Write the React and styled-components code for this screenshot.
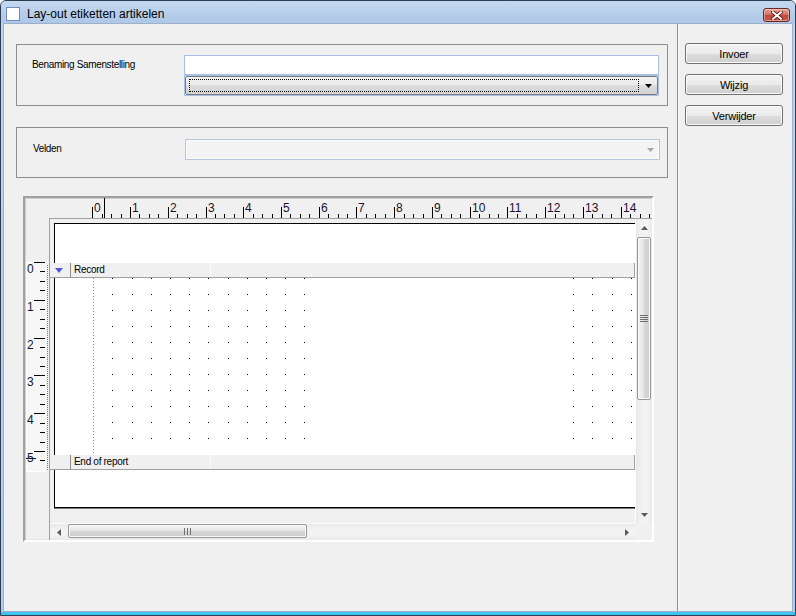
import React from "react";
import styled, { createGlobalStyle } from "styled-components";

const GlobalStyle = createGlobalStyle`
  html, body { margin: 0; padding: 0; background: #fff; }
  body { font-family: "Liberation Sans", Arial, sans-serif; }
  * { box-sizing: border-box; }
`;

const FONT = `"Liberation Sans", Arial, sans-serif`;

const Window = styled.div`
  width: 796px;
  height: 616px;
  display: flex;
  flex-direction: column;
  border: 1px solid #2c3e55;
  border-radius: 6px 6px 0 0;
  overflow: hidden;
  background: linear-gradient(
    to bottom,
    #bed4ee 0,
    #b2cbea calc(100% - 3px),
    #3ec5ee calc(100% - 3px)
  );
`;

const TitleBar = styled.div`
  height: 22px;
  display: flex;
  align-items: flex-start;
  padding: 6px 5px 0 5px;
  background: linear-gradient(to bottom, #c4d8f0, #adc7e8);
`;

const AppIcon = styled.span`
  width: 14px;
  height: 14px;
  border: 1px solid #6f8fb8;
  background: #fff;
  margin-right: 7px;
`;

const Title = styled.span`
  font-size: 12px;
  line-height: 14px;
  color: #000;
`;

const CloseButton = styled.div`
  margin-left: auto;
  margin-top: 1px;
  width: 27px;
  height: 14px;
  border: 1px solid #6a2622;
  border-radius: 3px;
  display: flex;
  align-items: center;
  justify-content: center;
  background: linear-gradient(to bottom, #e7a69a 0%, #d1736a 45%, #c0463a 50%, #c9594c 100%);
  box-shadow: inset 0 0 0 1px rgba(255, 220, 210, 0.5);
`;

const Client = styled.div`
  flex: 1;
  display: flex;
  margin: 0 2px 3px 2px;
  border: 1px solid #9db0c8;
  background: #f0f0f0;
  min-height: 0;
`;

const Main = styled.div`
  width: 673px;
  display: flex;
  flex-direction: column;
  padding: 20px 0 0 12px;
`;

const Side = styled.div`
  flex: 1;
  display: flex;
  flex-direction: column;
  gap: 10px;
  padding: 19px 0 0 7px;
  border-left: 1px solid #8e8e8e;
  box-shadow: inset 1px 0 0 #fafafa;
`;

const PushButton = styled.button`
  width: 98px;
  height: 21px;
  margin: 0;
  padding: 0;
  font-family: ${FONT};
  font-size: 11px;
  letter-spacing: -0.2px;
  color: #000;
  border: 1px solid #707070;
  border-radius: 3px;
  background: linear-gradient(to bottom, #f2f2f2 0%, #ebebeb 50%, #dddddd 51%, #cfcfcf 100%);
  box-shadow: inset 0 0 0 1px #fbfbfb;
`;

const GroupBox = styled.div`
  width: 652px;
  height: ${(p) => p.$h}px;
  margin-top: ${(p) => p.$mt || 0}px;
  border: 1px solid #8d8d8d;
  display: grid;
  grid-template-columns: 152px 475px;
  align-content: start;
  padding: ${(p) => p.$pt}px 0 0 ${(p) => p.$pl}px;
`;

const FieldLabel = styled.span`
  font-size: 10px;
  letter-spacing: -0.35px;
  line-height: 19px;
  color: #000;
`;

const TextInput = styled.input`
  width: 475px;
  height: 20px;
  margin: 0;
  padding: 0 3px;
  border: 1px solid #a9c1e5;
  background: #fff;
  outline: none;
  font-family: ${FONT};
  font-size: 11px;
`;

const Combo = styled.div`
  grid-column: ${(p) => p.$col || "auto"};
  width: 475px;
  height: 21px;
  display: flex;
  border: 1px solid ${(p) => (p.$disabled ? "#b4c6e0" : "#a7c0e6")};
  background: ${(p) => (p.$disabled ? "#f4f4f4" : "transparent")};
  box-shadow: ${(p) => (p.$disabled ? "inset 0 0 0 1px #fbfbfb" : "none")};
`;

const ComboFace = styled.div`
  flex: 1;
  display: flex;
  padding: 2px 0 2px 3px;
  border: 1px solid #7a7a7a;
  border-radius: 2px;
  background: linear-gradient(to bottom, #f2f2f2 0%, #ebebeb 45%, #dddddd 50%, #d3d3d3 100%);
`;

const FocusRect = styled.div`
  flex: 1;
  border: 1px dotted #000;
`;

const ArrowSlot = styled.div`
  width: ${(p) => p.$w}px;
  display: flex;
  align-items: center;
  justify-content: center;
  margin-left: auto;
`;

const Designer = styled.div`
  width: 631px;
  height: 346px;
  margin: 18px 0 0 7px;
  border: 2px solid;
  border-color: #a0a0a0 #ffffff #ffffff #a0a0a0;
  box-shadow: inset 1px 1px 0 #cfcfcf, inset -1px -1px 0 #e6e6e6;
  display: grid;
  grid-template-columns: 24px 1fr;
  grid-template-rows: 20px 1fr;
`;

const RulerCorner = styled.div``;

const ScrollView = styled.div`
  border-top: 1px solid #a0a0a0;
  border-left: 1px solid #a0a0a0;
  display: grid;
  grid-template-columns: 1fr 17px;
  grid-template-rows: 1fr 17px;
  min-width: 0;
  min-height: 0;
  overflow: hidden;
`;

const Viewport = styled.div`
  display: flex;
  flex-direction: column;
  overflow: hidden;
  background: #f0f0f0;
  min-width: 0;
`;

const PageTop = styled.div`
  margin: 4px 0 0 4px;
  height: 40px;
  flex-shrink: 0;
  border-top: 1px solid #000;
  border-left: 1px solid #000;
  background: #fff;
`;

const BandHeader = styled.div`
  height: 15px;
  flex-shrink: 0;
  display: flex;
  background: #f0f0f0;
  border-bottom: 1px solid #a0a0a0;
  border-right: 1px solid #a0a0a0;
`;

const BandMarker = styled.div`
  width: 20px;
  display: flex;
  align-items: center;
  padding-left: 5px;
`;

const BandLabel = styled.div`
  width: 141px;
  border-left: 1px solid #8c8c8c;
  border-right: 1px solid #fcfcfc;
  padding-left: 3px;
  font-size: 10px;
  letter-spacing: -0.3px;
  line-height: 14px;
  color: #000;
`;

const BandBody = styled.div`
  margin-left: 4px;
  height: 177px;
  flex-shrink: 0;
  border-left: 1px solid #000;
  background: #fff;
  display: flex;
`;

const PageBottom = styled.div`
  margin-left: 4px;
  height: 38px;
  flex-shrink: 0;
  border-left: 1px solid #000;
  border-bottom: 1px solid #000;
  box-shadow: 0 1px 0 #7a7a7a;
  background: #fff;
`;

const VScroll = styled.div`
  display: flex;
  flex-direction: column;
  background: linear-gradient(to right, #e9e9e9, #f3f3f3 40%, #f3f3f3 70%, #e9e9e9);
  border-left: 1px solid #fcfcfc;
`;

const HScroll = styled.div`
  display: flex;
  background: linear-gradient(to bottom, #e9e9e9, #f3f3f3 40%, #f3f3f3 70%, #e9e9e9);
  border-top: 1px solid #fcfcfc;
`;

const ScrollCorner = styled.div`
  background: #f0f0f0;
`;

const ScrollButton = styled.div`
  width: 17px;
  height: 17px;
  flex-shrink: 0;
  display: flex;
  align-items: center;
  justify-content: center;
  margin-left: ${(p) => (p.$end ? "auto" : "0")};
  margin-top: ${(p) => (p.$bottom ? "auto" : "0")};
`;

const Thumb = styled.div`
  display: flex;
  align-items: center;
  justify-content: center;
  border: 1px solid #979797;
  border-radius: 2px;
  ${(p) =>
    p.$vertical
      ? `width: 14px; height: 163px; margin: 1px 0 0 1px;
         background: linear-gradient(to right, #f4f4f4, #e4e4e4 50%, #d6d6d6 51%, #cfcfcf);`
      : `height: 14px; width: 239px; margin: 0 0 0 1px;
         background: linear-gradient(to bottom, #f4f4f4, #e4e4e4 50%, #d6d6d6 51%, #cfcfcf);`}
  box-shadow: inset 0 0 0 1px #fafafa;
`;

const Tri = ({ dir = "down", color = "#000", w = 7, h = 4 }) => {
  const pts = {
    down: `0,0 ${w},0 ${w / 2},${h}`,
    up: `0,${h} ${w},${h} ${w / 2},0`,
    left: `${w},0 ${w},${h} 0,${h / 2}`,
    right: `0,0 0,${h} ${w},${h / 2}`,
  }[dir];
  return (
    <svg width={w} height={h} viewBox={`0 0 ${w} ${h}`}>
      <polygon points={pts} fill={color} />
    </svg>
  );
};

const CloseGlyph = () => (
  <svg width="12" height="9" viewBox="0 0 12 9">
    <path d="M2 1.2 L10 7.8 M10 1.2 L2 7.8" stroke="#5a1a16" strokeWidth="3.6" strokeLinecap="square" />
    <path d="M2 1.2 L10 7.8 M10 1.2 L2 7.8" stroke="#fff" strokeWidth="2" strokeLinecap="square" />
  </svg>
);

const TopRuler = () => {
  const majors = Array.from({ length: 15 }, (_, n) => 44.3 + 37.74 * n);
  return (
    <svg width="603" height="20" style={{ display: "block" }}>
      <line x1="55.5" y1="0" x2="55.5" y2="20" stroke="#000" />
      {majors.map((x, n) => {
        const bx = Math.round(x) - 0.5;
        return (
          <g key={n}>
            <line x1={bx} y1="9" x2={bx} y2="20" stroke="#000" />
            {[1, 2, 3].map((k) => {
              const tx = Math.round(x + 9.43 * k) - 0.5;
              return tx < 603 ? (
                <line key={k} x1={tx} y1="16" x2={tx} y2="20" stroke="#000" />
              ) : null;
            })}
            <text x={bx + 1.5} y="14" fontSize="12" fontFamily={FONT} fill="#1c1030">
              {n}
            </text>
          </g>
        );
      })}
    </svg>
  );
};

const LeftRuler = () => {
  const top = 44;
  const step = 37.8;
  const ticks = [];
  for (let i = 1; i <= 22; i++) {
    const y = Math.round(top + (i * step) / 4) + 0.5;
    if (y > 252) break;
    const major = i % 4 === 0;
    ticks.push(<line key={i} x1={major ? 9 : 15} x2="20" y1={y} y2={y} stroke="#000" />);
  }
  return (
    <svg width="24" height="322" style={{ display: "block" }}>
      <rect x="1.5" y={top + 0.5} width="19" height="209" fill="#f6f6f6" stroke="#ffffff" />
      <line x1="9" x2="20" y1={top + 0.5} y2={top + 0.5} stroke="#000" />
      {ticks}
      {[0, 1, 2, 3, 4, 5].map((n) => (
        <text key={n} x="2" y={Math.round(top + n * step) + 11} fontSize="12" fontFamily={FONT} fill="#101838">
          {n}
        </text>
      ))}
      <line x1="1" x2="11" y1="240.5" y2="240.5" stroke="#101838" />
      <line x1="22.5" x2="22.5" y1="47" y2="252" stroke="#808080" strokeDasharray="1 1" />
    </svg>
  );
};

const GridDots = () => {
  const cols = [...Array(11).keys(), 24, 25, 26, 27];
  const rows = [...Array(11).keys()];
  return (
    <svg width="580" height="177" style={{ display: "block" }}>
      <line x1="38.5" y1="0" x2="38.5" y2="177" stroke="#8a8a8a" strokeDasharray="1 2" />
      {rows.map((r) =>
        cols.map((c) => (
          <rect
            key={`${r}-${c}`}
            x={Math.round(57.3 + 19.2 * c)}
            y={Math.round(15.95 * r)}
            width="1"
            height="1"
            fill="#000"
          />
        ))
      )}
    </svg>
  );
};

const Grip = ({ vertical }) =>
  vertical ? (
    <svg width="8" height="7">
      {[0.5, 2.5, 4.5, 6.5].map((y) => (
        <line key={y} x1="0" x2="8" y1={y} y2={y} stroke="#6f6f6f" />
      ))}
    </svg>
  ) : (
    <svg width="8" height="7">
      {[0.5, 3.5, 6.5].map((x) => (
        <line key={x} y1="0" y2="7" x1={x} x2={x} stroke="#6f6f6f" />
      ))}
    </svg>
  );

export default function App() {
  return (
    <>
      <GlobalStyle />
      <Window>
        <TitleBar>
          <AppIcon />
          <Title>Lay-out etiketten artikelen</Title>
          <CloseButton>
            <CloseGlyph />
          </CloseButton>
        </TitleBar>
        <Client>
          <Main>
            <GroupBox $h={62} $pt={10} $pl={15}>
              <FieldLabel>Benaming Samenstelling</FieldLabel>
              <TextInput defaultValue="" />
              <Combo $col="2">
                <ComboFace>
                  <FocusRect />
                  <ArrowSlot $w={18}>
                    <Tri dir="down" color="#000" w={7} h={4} />
                  </ArrowSlot>
                </ComboFace>
              </Combo>
            </GroupBox>

            <GroupBox $h={51} $pt={11} $pl={16} $mt={21}>
              <FieldLabel>Velden</FieldLabel>
              <Combo $disabled>
                <ArrowSlot $w={18}>
                  <Tri dir="down" color="#a6a6a6" w={7} h={4} />
                </ArrowSlot>
              </Combo>
            </GroupBox>

            <Designer>
              <RulerCorner />
              <TopRuler />
              <LeftRuler />
              <ScrollView>
                <Viewport>
                  <PageTop />
                  <BandHeader>
                    <BandMarker>
                      <Tri dir="down" color="#5454de" w={8} h={5} />
                    </BandMarker>
                    <BandLabel>Record</BandLabel>
                  </BandHeader>
                  <BandBody>
                    <GridDots />
                  </BandBody>
                  <BandHeader>
                    <BandMarker />
                    <BandLabel>End of report</BandLabel>
                  </BandHeader>
                  <PageBottom />
                </Viewport>
                <VScroll>
                  <ScrollButton>
                    <Tri dir="up" color="#5a5a5a" w={7} h={4} />
                  </ScrollButton>
                  <Thumb $vertical>
                    <Grip vertical />
                  </Thumb>
                  <ScrollButton $bottom>
                    <Tri dir="down" color="#5a5a5a" w={7} h={4} />
                  </ScrollButton>
                </VScroll>
                <HScroll>
                  <ScrollButton>
                    <Tri dir="left" color="#5a5a5a" w={4} h={7} />
                  </ScrollButton>
                  <Thumb>
                    <Grip />
                  </Thumb>
                  <ScrollButton $end>
                    <Tri dir="right" color="#5a5a5a" w={4} h={7} />
                  </ScrollButton>
                </HScroll>
                <ScrollCorner />
              </ScrollView>
            </Designer>
          </Main>
          <Side>
            <PushButton>Invoer</PushButton>
            <PushButton>Wijzig</PushButton>
            <PushButton>Verwijder</PushButton>
          </Side>
        </Client>
      </Window>
    </>
  );
}
